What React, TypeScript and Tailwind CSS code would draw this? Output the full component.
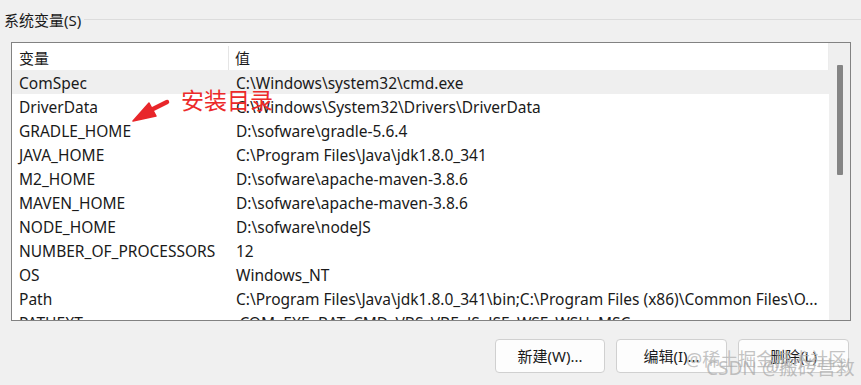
import React from "react";

const rows: [string, string][] = [
  ["ComSpec", "C:\\Windows\\system32\\cmd.exe"],
  ["DriverData", "C:\\Windows\\System32\\Drivers\\DriverData"],
  ["GRADLE_HOME", "D:\\sofware\\gradle-5.6.4"],
  ["JAVA_HOME", "C:\\Program Files\\Java\\jdk1.8.0_341"],
  ["M2_HOME", "D:\\sofware\\apache-maven-3.8.6"],
  ["MAVEN_HOME", "D:\\sofware\\apache-maven-3.8.6"],
  ["NODE_HOME", "D:\\sofware\\nodeJS"],
  ["NUMBER_OF_PROCESSORS", "12"],
  ["OS", "Windows_NT"],
  ["Path", "C:\\Program Files\\Java\\jdk1.8.0_341\\bin;C:\\Program Files (x86)\\Common Files\\O..."],
  ["PATHEXT", ".COM;.EXE;.BAT;.CMD;.VBS;.VBE;.JS;.JSE;.WSF;.WSH;.MSC"],
];

const font = { fontFamily: '"Noto Sans", "Noto Sans CJK SC", sans-serif' };

export default function App() {
  return (
    <div
      className="relative w-[861px] h-[385px] overflow-hidden bg-[#f0f0f0] text-[#1a1a1a]"
      style={font}
    >
      <div className="flex items-center h-[40px] pl-[4px] pb-[1px]">
        <span className="text-[15px] leading-[20px] whitespace-nowrap">系统变量(S)</span>
        <div className="flex-1 h-px bg-[#dcdcdc] ml-[3px]" />
      </div>

      <div className="ml-[11px] mt-[2px] w-[840px] h-[279px] border border-[#828282] bg-white flex overflow-hidden">
        <div className="flex-1 flex flex-col overflow-hidden">
          <div className="flex h-[27px] shrink-0 text-[15px] items-center pt-[3px] border-r border-[#ececec]">
            <div className="w-[217px] h-full flex items-center pl-[7px] border-r border-[#e5e5e5]">变量</div>
            <div className="flex-1 pl-[6px]">值</div>
          </div>
          {rows.map(([k, v], i) => (
            <div
              key={k}
              className={
                "flex h-[24px] shrink-0 items-center pt-[3px] text-[15.5px] whitespace-nowrap " +
                (i === 0 ? "bg-[#efefef]" : "")
              }
            >
              <div className="w-[217px] pl-[7px] shrink-0">{k}</div>
              <div className="flex-1 pl-[7px] overflow-hidden">{v}</div>
            </div>
          ))}
        </div>
        <div className="w-[21px] shrink-0 bg-[#efefef] flex justify-center pt-[22px] pb-[3px]">
          <div className="w-[6px] h-[110px] bg-[#858585] rounded-[1px]" />
        </div>
      </div>

      <div className="flex justify-end gap-[11px] pr-[12px] mt-[18px]">
        <button className="w-[110px] h-[34px] rounded-[4px] border border-[#d0d0d0] bg-[#fdfdfd] text-[15px] text-[#1a1a1a]">
          新建(W)...
        </button>
        <button className="w-[111px] h-[34px] rounded-[4px] border border-[#d0d0d0] bg-[#fdfdfd] text-[15px] text-[#1a1a1a]">
          编辑(I)...
        </button>
        <button className="w-[111px] h-[34px] rounded-[4px] border border-[#d0d0d0] bg-[#fdfdfd] text-[15px] text-[#1a1a1a]">
          删除(L)
        </button>
      </div>

      {/* annotation */}
      <div className="absolute left-[181px] top-[86px] text-[23px] leading-[28px] text-[#ec2a2a] whitespace-nowrap">
        安装目录
      </div>
      <svg className="absolute left-0 top-0" width="861" height="385" viewBox="0 0 861 385">
        <path d="M151 110 L167 102" stroke="#e8262a" strokeWidth="4.5" strokeLinecap="round" />
        <path d="M133 121 L149 103 L156 116 Z" fill="#e8262a" stroke="#e8262a" strokeWidth="1.5" strokeLinejoin="round" />
      </svg>

      {/* watermark */}
      <div className="absolute left-[686px] top-[348px] text-[18px] leading-[22px] text-[#b4b4b4]/80 whitespace-nowrap">
        @稀土掘金技术社区
      </div>
      <div className="absolute left-[706px] top-[356px] text-[19px] leading-[24px] text-[#a8a8a8]/70 whitespace-nowrap">
        CSDN @搬砖营救
      </div>
    </div>
  );
}
